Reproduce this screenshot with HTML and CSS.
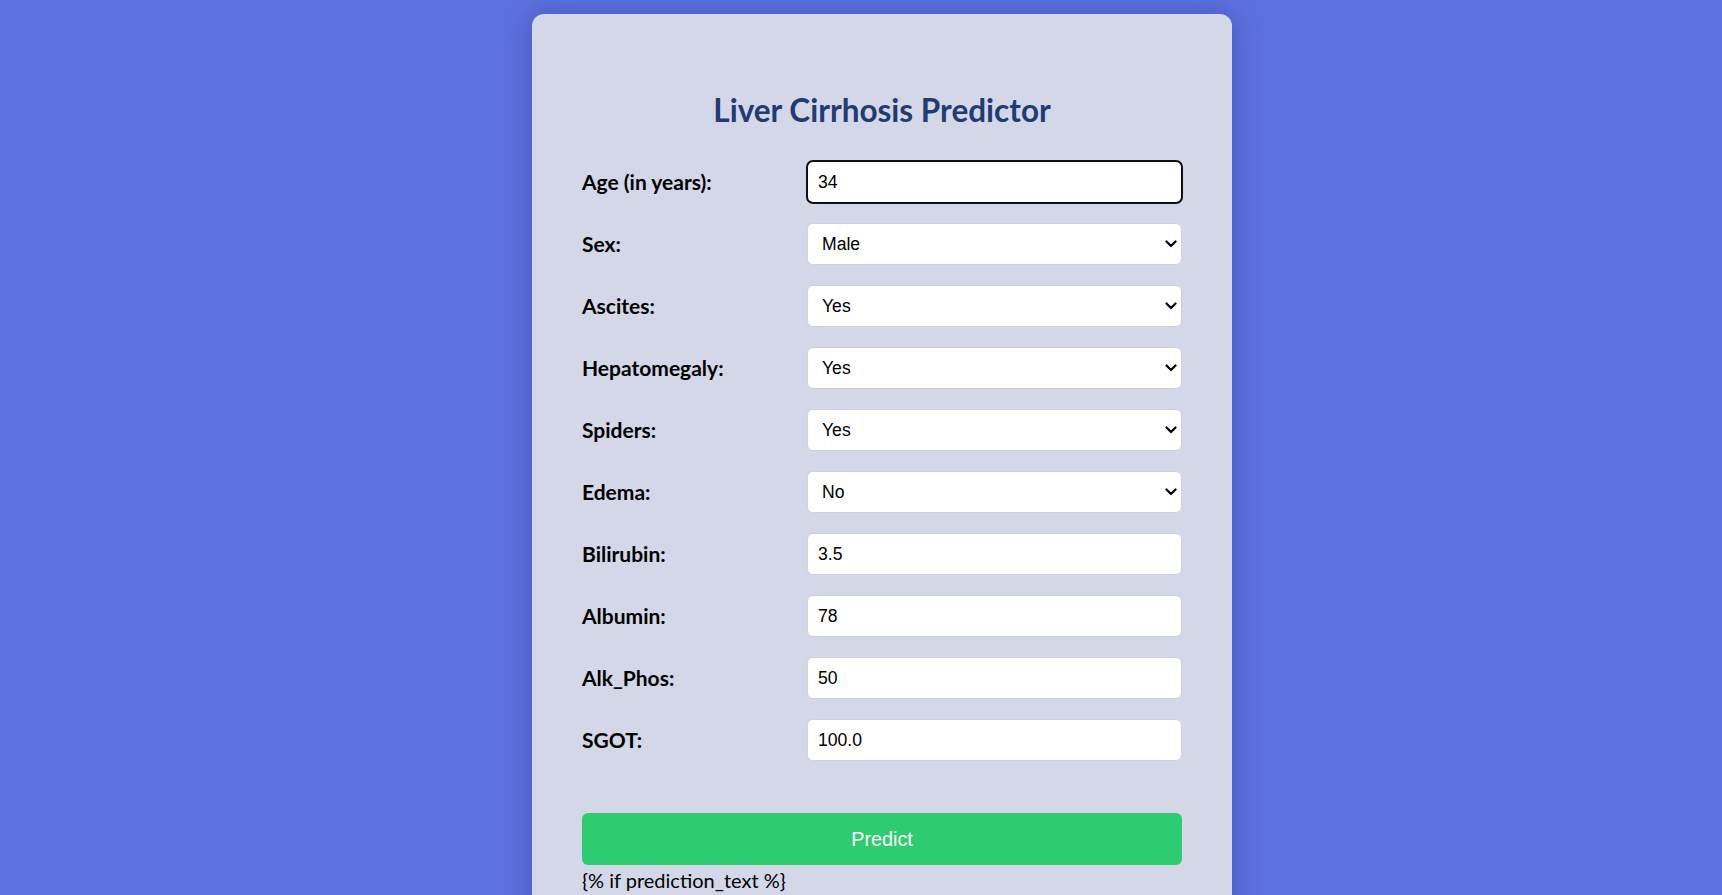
FILE: index.html
```html
<!DOCTYPE html>
<html lang="en">
<head>
<meta charset="utf-8">
<title>Liver Cirrhosis Predictor</title>
<link rel="stylesheet" href="styles.css">
</head>
<body>
<div class="page">
  <div class="card">
    <h2 class="title">Liver Cirrhosis Predictor</h2>
    <form class="form">
      <label class="label" for="age">Age (in years):</label>
      <input class="field focused" id="age" type="text" value="34">

      <label class="label" for="sex">Sex:</label>
      <select class="field select" id="sex"><option>Male</option><option>Female</option></select>

      <label class="label" for="ascites">Ascites:</label>
      <select class="field select" id="ascites"><option>Yes</option><option>No</option></select>

      <label class="label" for="hep">Hepatomegaly:</label>
      <select class="field select" id="hep"><option>Yes</option><option>No</option></select>

      <label class="label" for="spiders">Spiders:</label>
      <select class="field select" id="spiders"><option>Yes</option><option>No</option></select>

      <label class="label" for="edema">Edema:</label>
      <select class="field select" id="edema"><option>No</option><option>Yes</option></select>

      <label class="label" for="bili">Bilirubin:</label>
      <input class="field" id="bili" type="text" value="3.5">

      <label class="label" for="alb">Albumin:</label>
      <input class="field" id="alb" type="text" value="78">

      <label class="label" for="alk">Alk_Phos:</label>
      <input class="field" id="alk" type="text" value="50">

      <label class="label" for="sgot">SGOT:</label>
      <input class="field" id="sgot" type="text" value="100.0">

      <button class="btn" type="button">Predict</button>
    </form>
    <p class="note">{% if prediction_text %}</p>
  </div>
</div>
</body>
</html>
```
FILE: styles.css
```css
html, body {
  margin: 0;
  padding: 0;
}
body {
  background: #5e71e0;
  font-family: "Lato", "Open Sans", sans-serif;
  overflow: hidden;
  height: 895px;
}
.page {
  display: flex;
  justify-content: center;
  padding: 14px 0 0 42px;
}
.card {
  width: 600px;
  padding: 50px 50px 40px;
  background: #d4d7e8;
  border-radius: 12px;
  box-shadow: 0 0 30px rgba(40, 50, 140, 0.45);
}
.title {
  margin: 26px 0 31px;
  text-align: center;
  font-size: 31.5px;
  font-weight: 700;
  color: #203c73;
  line-height: 40px;
}
.form {
  display: grid;
  grid-template-columns: 225px 1fr;
  row-gap: 20px;
  align-items: center;
}
.label {
  font-size: 21px;
  font-weight: 700;
  color: #000;
  padding-bottom: 1px;
}
.field {
  box-sizing: border-box;
  height: 42px;
  width: 100%;
  padding: 0 10px;
  border: 1px solid #cfd1d8;
  border-radius: 6px;
  background: #fff;
  font-family: "Liberation Sans", Arial, sans-serif;
  font-size: 17.6px;
  color: #000;
}
.select {
  -webkit-appearance: none;
  appearance: none;
  padding-left: 14px;
  background: #fff url("data:image/svg+xml;utf8,<svg xmlns='http://www.w3.org/2000/svg' width='12' height='8' viewBox='0 0 12 8'><polyline points='1.5,1.5 6,6 10.5,1.5' fill='none' stroke='black' stroke-width='2.2' stroke-linecap='round' stroke-linejoin='round'/></svg>") no-repeat right 4px center;
}
.focused {
  outline: 2px solid #101010;
  outline-offset: -1px;
}
.btn {
  grid-column: 1 / 3;
  margin-top: 32px;
  height: 52px;
  border: none;
  border-radius: 6px;
  background: #2ecc71;
  color: #fff;
  font-family: "Liberation Sans", Arial, sans-serif;
  font-size: 19.8px;
  cursor: pointer;
}
.note {
  margin: 3px 0 0;
  font-size: 20px;
  color: #000;
}
```
